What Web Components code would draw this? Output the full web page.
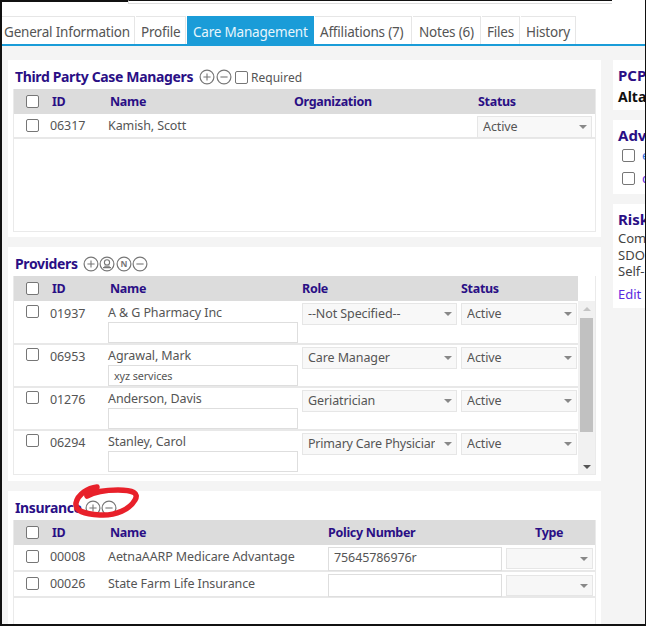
<!DOCTYPE html>
<html>
<head>
<meta charset="utf-8">
<title>Care Management</title>
<style>
  html, body { margin: 0; padding: 0; background: #fff; }
  body { width: 646px; height: 626px; overflow: hidden; font: 13px "Noto Sans", "Open Sans", sans-serif; color: #555; }
</style>
</head>
<body>
<template id="icon-plus"><svg width="16" height="16" viewBox="0 0 16 16"><circle cx="8" cy="8" r="6.9" fill="none" stroke="#777" stroke-width="1.2"/><path d="M4.4 8h7.2M8 4.4v7.2" stroke="#777" stroke-width="1.1"/></svg></template>
<template id="icon-minus"><svg width="16" height="16" viewBox="0 0 16 16"><circle cx="8" cy="8" r="6.9" fill="none" stroke="#777" stroke-width="1.2"/><path d="M4.4 8h7.2" stroke="#777" stroke-width="1.1"/></svg></template>
<template id="icon-person"><svg width="16" height="16" viewBox="0 0 16 16"><circle cx="8" cy="8" r="6.9" fill="none" stroke="#777" stroke-width="1.2"/><circle cx="8" cy="6.4" r="2.6" fill="none" stroke="#777" stroke-width="1.1"/><path d="M4 11.6h8M5.2 10.2h5.6" stroke="#777" stroke-width="1.1"/></svg></template>
<template id="icon-n"><svg width="16" height="16" viewBox="0 0 16 16"><circle cx="8" cy="8" r="6.9" fill="none" stroke="#777" stroke-width="1.2"/><text x="8" y="11" text-anchor="middle" font-family="Noto Sans" font-size="8.5" font-weight="700" fill="#777">N</text></svg></template>

<app-frame>
  <tab-bar>
    <tab-item style="width:133px;padding-left:2px">General Information</tab-item>
    <tab-item style="width:50px">Profile</tab-item>
    <tab-item style="width:127px;padding-left:6px" active>Care Management</tab-item>
    <tab-item style="width:97px">Affiliations (7)</tab-item>
    <tab-item style="width:68px;padding-left:6px">Notes (6)</tab-item>
    <tab-item style="width:38px">Files</tab-item>
    <tab-item style="width:55px">History</tab-item>
  </tab-bar>
  <page-body>
    <panel-card style="height:177px" heading="Third Party Case Managers" icons="plus minus" required>
      <grid-table style="--cols:38px 58px 184px 184px 119px;height:143px">
        <table-head><check-box></check-box><span>ID</span><span>Name</span><span>Organization</span><span>Status</span></table-head>
        <table-row style="height:25px"><check-box></check-box><span>06317</span><span>Kamish, Scott</span><i></i><pick-box style="width:115px;margin:1px 0 0 -1px">Active</pick-box></table-row>
      </grid-table>
    </panel-card>

    <panel-card style="height:234px;--gap:5px" heading="Providers" icons="plus person n minus">
      <grid-table style="--cols:38px 58px 192px 159px 118px;height:199px">
        <table-head style="margin-right:17px"><check-box></check-box><span>ID</span><span>Name</span><span>Role</span><span>Status</span></table-head>
        <scroll-list>
          <table-row tall first><check-box></check-box><span>01937</span><name-cell>A &amp; G Pharmacy Inc<text-box></text-box></name-cell><pick-box style="width:155px">--Not Specified--</pick-box><pick-box style="width:116px">Active</pick-box></table-row>
          <table-row tall><check-box></check-box><span>06953</span><name-cell>Agrawal, Mark<text-box small>xyz services</text-box></name-cell><pick-box style="width:155px">Care Manager</pick-box><pick-box style="width:116px">Active</pick-box></table-row>
          <table-row tall><check-box></check-box><span>01276</span><name-cell>Anderson, Davis<text-box></text-box></name-cell><pick-box style="width:155px">Geriatrician</pick-box><pick-box style="width:116px">Active</pick-box></table-row>
          <table-row tall last><check-box></check-box><span>06294</span><name-cell>Stanley, Carol<text-box></text-box></name-cell><pick-box style="width:155px;letter-spacing:-.2px">Primary Care Physician</pick-box><pick-box style="width:116px">Active</pick-box></table-row>
        </scroll-list>
      </grid-table>
    </panel-card>

    <panel-card style="height:140px;--gap:3px" heading="Insurance" icons="plus minus">
      <grid-table style="--cols:38px 58px 218px 178px 90px;height:107px">
        <table-head><check-box></check-box><span>ID</span><span>Name</span><span>Policy Number</span><span style="padding-left:29px">Type</span></table-head>
        <table-row style="height:27px"><check-box></check-box><span>00008</span><span>AetnaAARP Medicare Advantage</span><text-box style="width:174px;height:24px;margin-top:1px">75645786976r</text-box><pick-box style="width:87px;height:21px;margin-top:2px;background:#f7f7f7"></pick-box></table-row>
        <table-row style="height:26px"><check-box></check-box><span>00026</span><span>State Farm Life Insurance</span><text-box style="width:174px;height:23px;margin-top:1px"></text-box><pick-box style="width:87px;height:21px;margin-top:2px;background:#f7f7f7"></pick-box></table-row>
      </grid-table>
      <red-scribble></red-scribble>
    </panel-card>

    <side-card slot="side" style="height:50px" heading="PCP"><b style="display:block;margin-top:2px;color:#111;font-size:14px">Alta</b></side-card>
    <side-card slot="side" style="height:74px" heading="Adv">
      <check-line style="margin-top:3px;color:#2f6fe0">e</check-line>
      <check-line style="margin-top:9px;color:#5b2be0">c</check-line>
    </side-card>
    <side-card slot="side" style="height:104px" heading="Risk">
      <div style="line-height:16.5px;margin-top:1px">Com<br>SDO<br>Self-</div>
      <div style="margin-top:5px;color:#5b2be0;line-height:18px">Edit</div>
    </side-card>
  </page-body>
</app-frame>

<script>
function shadow(el, html) {
  el.attachShadow({ mode: 'open' }).innerHTML = html
}

class AppFrame extends HTMLElement {
  connectedCallback() {
    shadow(this, `<style>
      :host { display:flex; flex-direction:column; box-sizing:border-box; width:646px; height:626px; overflow:hidden;
        border-left:2px solid #111; border-right:1px solid #111; border-bottom:2px solid #111; background:#fff; }
      .top { display:flex; flex:none; height:4px; }
      .black { width:126px; height:2px; background:#111; }
      .line { box-sizing:border-box; width:484px; height:4px; border-top:1px solid #111; border-left:1px solid #ddd; border-bottom:1px solid #ddd; }
    </style><div class="top"><div class="black"></div><div class="line"></div></div><slot></slot>`)
  }
}

class TabBar extends HTMLElement {
  connectedCallback() {
    shadow(this, `<style>
      :host { display:flex; flex:none; gap:1px; margin-top:12px; height:28px; border-bottom:2px solid #1a9cd8; }
    </style><slot></slot>`)
  }
}

class TabItem extends HTMLElement {
  connectedCallback() {
    shadow(this, `<style>
      :host { display:block; box-sizing:border-box; height:28px; padding:5px 0 0 5px; font-size:13.5px; letter-spacing:-.2px; line-height:21px; color:#555;
        border:1px solid #e6e6e6; border-width:1px 1px 0 0; white-space:nowrap; }
      :host([active]) { background:#1a9cd8; color:#e8f6fc; border-color:#1a9cd8; }
    </style><slot></slot>`)
  }
}

class PageBody extends HTMLElement {
  connectedCallback() {
    shadow(this, `<style>
      :host { display:flex; flex:1; gap:12px; padding:14px 0 0 6px; background:#f4f4f4; min-height:0; }
      .main { display:flex; flex-direction:column; gap:10px; width:593px; flex:none; }
      .side { display:flex; flex-direction:column; gap:10px; flex:none; width:120px; }
    </style>
    <div class="main"><slot></slot></div>
    <div class="side"><slot name="side"></slot></div>`)
  }
}

class SideCard extends HTMLElement {
  connectedCallback() {
    shadow(this, `<style>
      :host { display:block; box-sizing:border-box; flex:none; background:#fff; padding:6px 5px 0 5px; line-height:19px; font-size:13px; color:#444; }
      b { display:block; color:#2a0f85; font-size:15px; font-weight:700; }
    </style><b>${this.getAttribute('heading')}</b><slot></slot>`)
  }
}

class CheckLine extends HTMLElement {
  connectedCallback() {
    shadow(this, `<style>
      :host { display:flex; align-items:center; gap:7px; height:14px; margin-left:4px; }
    </style><check-box></check-box><slot></slot>`)
  }
}

class PanelCard extends HTMLElement {
  connectedCallback() {
    const icons = (this.getAttribute('icons') || '').split(' ').map(n => {
      return `<span class="ic">${document.getElementById('icon-' + n).innerHTML}</span>`
    }).join('')
    const req = this.hasAttribute('required')
      ? `<label><check-box></check-box>Required</label>` : ''
    shadow(this, `<style>
      :host { display:block; position:relative; box-sizing:border-box; flex:none; background:#fff; padding:7px 5px 0 5px; }
      .head { display:flex; align-items:center; box-sizing:border-box; height:22px; padding-bottom:2px; margin-left:2px; }
      h2 { margin:0 var(--gap, 6px) 0 0; font-size:14px; letter-spacing:-.35px; line-height:20px; font-weight:700; color:#2a0f85; }
      .ic { display:block; width:16.5px; height:16px; }
      svg { display:block; }
      label { display:flex; align-items:center; margin-left:3px; font-size:12px; color:#555; gap:3px; }
    </style><div class="head"><h2>${this.getAttribute('heading')}</h2>${icons}${req}</div><slot></slot>`)
  }
}

class GridTable extends HTMLElement {
  connectedCallback() {
    shadow(this, `<style>
      :host { display:block; box-sizing:border-box; border:1px solid #eaeaea; border-top:0; overflow:hidden; }
    </style><slot></slot>`)
  }
}

class TableHead extends HTMLElement {
  connectedCallback() {
    shadow(this, `<style>
      :host { display:grid; grid-template-columns:var(--cols); align-items:center; box-sizing:border-box; height:25px; background:#dcdcdc;
        color:#2a0f85; font-weight:700; font-size:12.5px; letter-spacing:-.3px; }
      ::slotted(check-box) { margin-left:12px; }
    </style><slot></slot>`)
  }
}

class TableRow extends HTMLElement {
  connectedCallback() {
    shadow(this, `<style>
      :host { display:grid; grid-template-columns:var(--cols); box-sizing:border-box; align-items:start; padding-top:1px;
        border-bottom:2px solid #e8e8e8; font-size:12.5px; letter-spacing:-.1px; line-height:22px; color:#555; }
      :host([tall]) { height:43px; }
      :host([last]) { border-bottom:0; }
      ::slotted(check-box) { margin:4px 0 0 12px; }
      :host([tall]) ::slotted(check-box) { margin-top:2px; }
      :host([tall]:not([first])) ::slotted(pick-box) { margin-top:1px; }
      ::slotted(span), ::slotted(name-cell) { margin-left:-2px; }
    </style><slot></slot>`)
  }
}

class ScrollList extends HTMLElement {
  connectedCallback() {
    shadow(this, `<style>
      :host { display:flex; height:174px; }
      .rows { flex:1; min-width:0; padding-top:1px; }
      .bar { display:flex; flex-direction:column; align-items:center; flex:none; width:17px; background:#f1f1f1; }
      .up, .down { width:0; height:0; border:4px solid transparent; }
      .up { border-bottom:4px solid #c4c4c4; margin-top:2px; }
      .thumb { width:13px; height:114px; margin-top:7px; background:#c1c1c1; }
      .down { border-top:4px solid #555; margin-top:auto; margin-bottom:2px; }
    </style><div class="rows"><slot></slot></div>
    <div class="bar"><div class="up"></div><div class="thumb"></div><div class="down"></div></div>`)
  }
}

class NameCell extends HTMLElement {
  connectedCallback() {
    shadow(this, `<style>
      :host { display:block; line-height:20px; }
      ::slotted(text-box) { width:190px; height:21px; margin-top:-1px; }
    </style><slot></slot>`)
  }
}

class TextBox extends HTMLElement {
  connectedCallback() {
    shadow(this, `<style>
      :host { display:block; box-sizing:border-box; height:22px; padding:0 5px; line-height:20px; border:1px solid #dedede; background:#fff;
        font-size:12.5px; color:#555; white-space:nowrap; overflow:hidden; }
      :host([small]) { font-size:10.8px; }
    </style><slot></slot>`)
  }
}

class PickBox extends HTMLElement {
  connectedCallback() {
    shadow(this, `<style>
      :host { display:block; position:relative; box-sizing:border-box; height:22px; padding:0 21px 0 5px; line-height:20px; font-size:12.5px;
        border:1px solid #e6e6e6; background:#f8f8f8; color:#555; white-space:nowrap; }
      :host::after { content:''; position:absolute; right:4px; top:8px; border:4px solid transparent; border-top:4px solid #888; border-bottom:0; }
      div { overflow:hidden; }
    </style><div><slot></slot></div>`)
  }
}

class CheckBox extends HTMLElement {
  connectedCallback() {
    shadow(this, `<style>
      :host { display:block; flex:none; box-sizing:border-box; width:13px; height:13px; border:1px solid #767676; border-radius:2px; background:#fff; }
    </style>`)
  }
}

class RedScribble extends HTMLElement {
  connectedCallback() {
    shadow(this, `<style>
      :host { position:absolute; left:0; top:0; width:140px; height:34px; pointer-events:none; }
      svg { display:block; overflow:visible; }
    </style><svg width="140" height="34" viewBox="0 0 140 34">
      <path d="M89 -4C80 -3 70 3 68 12C67 20 76 23 92 24C108 25 122 18 127 9C131 2 125 -1 110 -1C98 -1 86 1 79 5"
        fill="none" stroke="#e8202a" stroke-width="5.5" stroke-linecap="round"/>
    </svg>`)
  }
}

customElements.define('check-box', CheckBox)
customElements.define('app-frame', AppFrame)
customElements.define('tab-bar', TabBar)
customElements.define('tab-item', TabItem)
customElements.define('page-body', PageBody)
customElements.define('side-card', SideCard)
customElements.define('check-line', CheckLine)
customElements.define('panel-card', PanelCard)
customElements.define('grid-table', GridTable)
customElements.define('table-head', TableHead)
customElements.define('table-row', TableRow)
customElements.define('scroll-list', ScrollList)
customElements.define('name-cell', NameCell)
customElements.define('text-box', TextBox)
customElements.define('pick-box', PickBox)
customElements.define('red-scribble', RedScribble)
</script>
</body>
</html>
